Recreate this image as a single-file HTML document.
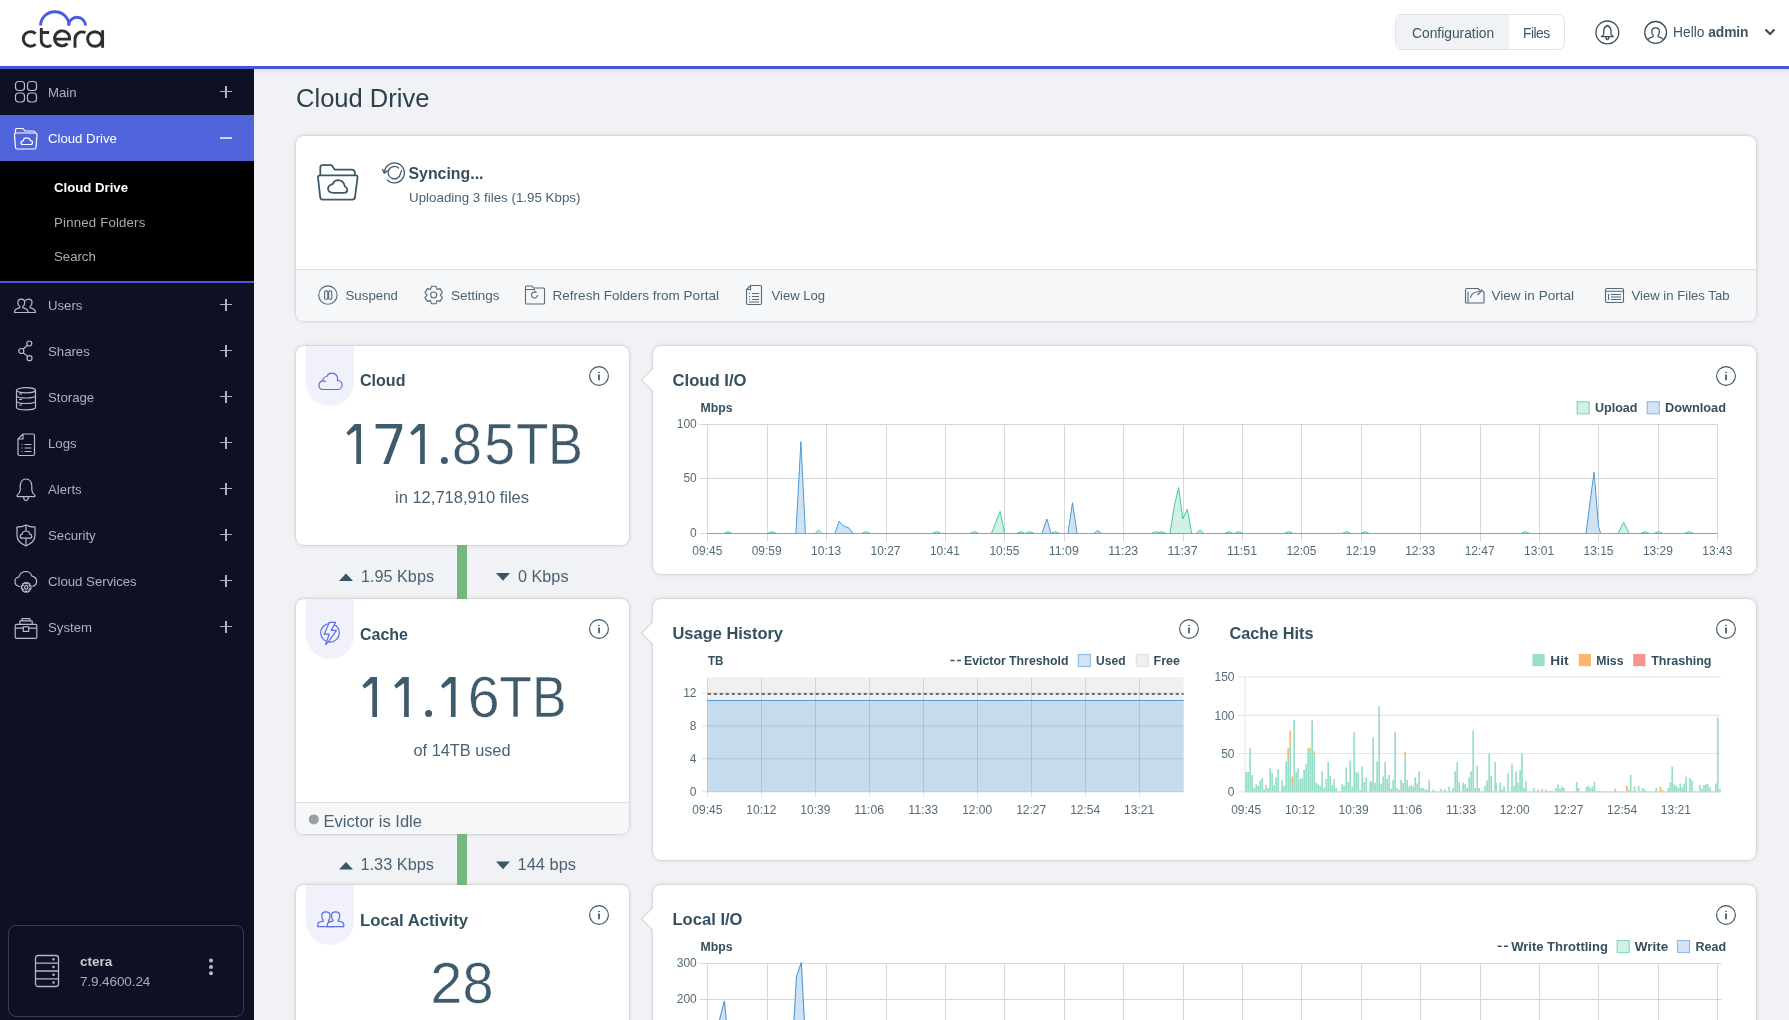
<!DOCTYPE html>
<html><head><meta charset="utf-8">
<style>
*{box-sizing:border-box;margin:0;padding:0}
html,body{width:1789px;height:1020px;overflow:hidden;background:#f0f2f5;font-family:"Liberation Sans",sans-serif;color:#3c5665}
.abs{position:absolute}
#hdr{position:absolute;left:0;top:0;width:1789px;height:66px;background:#fff;will-change:transform}
#hline{position:absolute;left:0;top:66px;width:1789px;height:3px;background:#4656d9}
#side{position:absolute;left:0;top:69px;width:254px;height:951px;background:#0d1123;will-change:transform}
.nav{position:absolute;left:0;width:254px;height:46px;color:#aeb1bd;font-size:13.2px}
.nav .t{position:absolute;left:48px;top:15.5px;letter-spacing:0px}
.nav .pl{position:absolute;left:220px;top:17px;width:12px;height:12px}
.nav .pl:before{content:"";position:absolute;left:0;top:5.2px;width:12px;height:1.3px;background:#aeb2bc}
.nav .pl:after{content:"";position:absolute;left:5.35px;top:-0.5px;width:1.3px;height:12px;background:#aeb2bc}
.nav svg{position:absolute;left:13px;top:11px}
.card{position:absolute;background:#fff;border-radius:8px;box-shadow:0 0 0 0.5px rgba(0,0,0,.07),0 0 4px rgba(0,0,0,.17)}
.info{position:absolute;width:21px;height:21px;border:1.3px solid #3c5665;border-radius:50%}
.info:after{content:"i";position:absolute;left:0;top:2px;width:100%;text-align:center;font:bold 12px "Liberation Serif",serif;color:#3c5665}
</style></head><body>
<div id="hdr">
<svg class="abs" style="left:0;top:0" width="120" height="60" viewBox="0 0 120 60">
 <g fill="none" stroke="#4a5bdc" stroke-width="2.9">
  <path d="M40.6 25.6 A14.2 13.8 0 0 1 69.1 25.6"/>
  <path d="M68.5 25.6 A8.5 8.3 0 0 1 85.5 25.6"/>
 </g>
 <g fill="none" stroke="#2f2f33" stroke-width="2.9">
  <path d="M35.6 33.6 A7.3 7.3 0 1 0 35.6 44.2"/>
  <path d="M41.3 28 V40.5 A6 6 0 0 0 51.3 45"/>
  <path d="M41.3 32.5 H49.2"/>
  <path d="M54.5 39.1 H69.6 A7.5 7.5 0 1 0 67.5 43.6"/>
  <path d="M75 47.8 V39 A7 7 0 0 1 85.4 32.8"/>
  <circle cx="94.9" cy="39" r="7.3"/>
  <path d="M102.6 30.2 V47.8"/>
 </g>
</svg>
<div class="abs" style="left:1395px;top:14px;width:170px;height:36px;border:1px solid #dfe2e6;border-radius:7px;overflow:hidden;background:#fff">
 <div class="abs" style="left:0;top:0;width:113px;height:34px;background:#f0f2f5"></div>
 <div class="abs" style="left:16px;top:10.5px;font-size:13.8px;color:#3c5665">Configuration</div>
 <div class="abs" style="left:127px;top:10.5px;font-size:13.8px;letter-spacing:-0.5px;color:#3c5665">Files</div>
</div>
<svg class="abs" style="left:1590px;top:15px" width="35" height="35" viewBox="0 0 35 35">
 <circle cx="17.35" cy="17.4" r="11.4" fill="none" stroke="#36505f" stroke-width="1.3"/>
 <path d="M17.35 10.3 Q14 12 13.7 15.5 V19.2 Q13.4 20.6 11.4 21.6 H23.3 Q21.3 20.6 21 19.2 V15.5 Q20.7 12 17.35 10.3 Z M15.8 21.8 Q15.8 24.5 17.35 24.5 Q18.9 24.5 18.9 21.8" fill="none" stroke="#36505f" stroke-width="1.3" stroke-linejoin="round"/>
</svg>
<svg class="abs" style="left:1638px;top:15px" width="35" height="35" viewBox="0 0 35 35">
 <circle cx="17.6" cy="17.4" r="10.9" fill="none" stroke="#36505f" stroke-width="1.3"/>
 <path d="M9.8 24.8 Q11 22.8 14 22.2 Q15.3 21.9 15.3 20.6 Q13.8 19.2 13.8 16.5 Q13.8 12.8 17.6 12.8 Q21.4 12.8 21.4 16.5 Q21.4 19.2 19.9 20.6 Q19.9 21.9 21.2 22.2 Q24.2 22.8 25.4 24.8" fill="none" stroke="#36505f" stroke-width="1.3"/>
</svg>
<div class="abs" style="left:1673px;top:25px;font-size:13.8px;color:#3c5665;white-space:nowrap">Hello <b style="letter-spacing:-0.1px">admin</b></div>
<svg class="abs" style="left:1762px;top:26px" width="16" height="12" viewBox="0 0 16 12">
 <path d="M3.5 3.5 L8 8 L12.5 3.5" fill="none" stroke="#36505f" stroke-width="2.2"/>
</svg>
</div>
<div id="hline"></div>
<div id="hshadow" class="abs" style="left:254px;top:69px;width:1535px;height:5px;background:linear-gradient(rgba(0,0,0,.07),rgba(0,0,0,0))"></div>
<div id="side">
<div class="nav" style="top:0"><svg width="26" height="26" viewBox="0 0 26 26" stroke="#b9bcc6" stroke-width="1.2" fill="none"><rect x="2.5" y="1.5" width="9" height="9" rx="3"/><rect x="14.5" y="1.5" width="9" height="9" rx="3"/><rect x="2.5" y="13" width="9" height="9" rx="3"/><rect x="14.5" y="13" width="9" height="9" rx="3"/></svg><span class="t">Main</span><i class="pl"></i></div>
<div class="nav" style="top:46px;background:#5064dc;color:#fff"><svg width="26" height="26" viewBox="0 0 26 26" stroke="#fff" stroke-width="1.2" fill="none"><path d="M2.5 7 V4 Q2.5 2.5 4 2.5 H10 L12 5 H20.5 Q22 5 22 6.5 V7"/><path d="M1.5 8.5 Q1.5 7 3 7 H22.5 Q24 7 24 8.5 L23 21.5 Q22.8 23 21.5 23 H4 Q2.7 23 2.5 21.5 Z"/><path d="M8 18.5 H17.5 Q19.5 18.5 19.5 16.5 Q19.5 14.6 17.4 14.6 Q16.6 11.8 13.6 11.8 Q10.5 11.8 10.2 14.8 Q8 14.8 8 16.6 Q8 18.5 10 18.5"/></svg><span class="t">Cloud Drive</span><i class="abs" style="left:220px;top:22px;width:12px;height:1.6px;background:#d3d7f6"></i></div>
<div class="abs" style="left:0;top:92px;width:254px;height:120px;background:#000"></div>
<div class="abs" style="left:0;top:212px;width:254px;height:2px;background:#4a5bd8"></div>
<div class="abs" style="left:54px;top:111px;font-size:13.2px;font-weight:bold;color:#fff;letter-spacing:0px">Cloud Drive</div>
<div class="abs" style="left:54px;top:146px;font-size:13.2px;color:#a9acb6;letter-spacing:0.2px">Pinned Folders</div>
<div class="abs" style="left:54px;top:180px;font-size:13.2px;color:#a9acb6;letter-spacing:0px">Search</div>
<div class="nav" style="top:213px"><svg width="26" height="26" viewBox="0 0 26 26" stroke="#b9bcc6" stroke-width="1.2" fill="none"><path d="M1.5 19.5 Q1.5 16.2 4.8 15.4 L6.8 14.8 V13.5 Q4.9 12.3 4.9 9.6 Q4.9 6.2 8.3 6.2 Q11.7 6.2 11.7 9.6 Q11.7 12.3 9.8 13.5 V14.8 L11.8 15.4 Q15.1 16.2 15.1 19.5 Z"/><path d="M12.3 7.6 Q13.2 6.2 15.6 6.2 Q19 6.2 19 9.6 Q19 12.3 17.1 13.5 V14.8 L19.1 15.4 Q22.4 16.2 22.4 19.5 H15.1"/></svg><span class="t">Users</span><i class="pl"></i></div>
<div class="nav" style="top:259px"><svg width="26" height="26" viewBox="0 0 26 26" stroke="#b9bcc6" stroke-width="1.2" fill="none"><circle cx="8.3" cy="12" r="2.5"/><circle cx="16.3" cy="4.5" r="2.5"/><circle cx="16.5" cy="19.2" r="2.5"/><path d="M10.1 10.3 L14.5 6.2 M10.2 13.8 L14.6 17.4"/></svg><span class="t">Shares</span><i class="pl"></i></div>
<div class="nav" style="top:305px"><svg width="26" height="26" viewBox="0 0 26 26" stroke="#b9bcc6" stroke-width="1.2" fill="none"><ellipse cx="13" cy="5.3" rx="9.5" ry="2.6"/><path d="M3.5 5.3 V22.2 Q3.5 24.8 13 24.8 Q22.5 24.8 22.5 22.2 V5.3 M3.5 10.5 Q3.5 13 13 13 Q22.5 13 22.5 10.5 M3.5 16 Q3.5 18.5 13 18.5 Q22.5 18.5 22.5 16 M6 9 H9 M6 14.5 H9 M6 20 H9"/></svg><span class="t">Storage</span><i class="pl"></i></div>
<div class="nav" style="top:351px"><svg width="26" height="26" viewBox="0 0 26 26" stroke="#b9bcc6" stroke-width="1.2" fill="none"><path d="M10 3 H20 Q21.5 3 21.5 4.5 V23 Q21.5 24.5 20 24.5 H6.5 Q5 24.5 5 23 V8 Z M10 3 V8 H5"/><path d="M8.5 13.5 H9.5 M11.5 13.5 H18.5 M8.5 17 H9.5 M11.5 17 H18.5 M8.5 20.5 H9.5 M11.5 20.5 H18.5"/></svg><span class="t">Logs</span><i class="pl"></i></div>
<div class="nav" style="top:397px"><svg width="26" height="26" viewBox="0 0 26 26" stroke="#b9bcc6" stroke-width="1.2" fill="none"><path d="M13 2 Q7.6 2 7.2 9 V13 Q6.8 16.3 4.2 18.2 Q3.4 19.6 5 19.6 H21 Q22.6 19.6 21.8 18.2 Q19.2 16.3 18.8 13 V9 Q18.4 2 13 2 Z"/><path d="M10.6 19.8 Q10.8 23.6 13 23.6 Q15.2 23.6 15.4 19.8"/></svg><span class="t">Alerts</span><i class="pl"></i></div>
<div class="nav" style="top:443px"><svg width="26" height="26" viewBox="0 0 26 26" stroke="#b9bcc6" stroke-width="1.2" fill="none"><path d="M4 4.2 Q9 4.2 13 2 Q17 4.2 22 4.2 V12.5 Q22 19 13 23 Q4 19 4 12.5 Z"/><path d="M9.2 15.2 H16.8 Q18.8 15.2 18.8 13.2 Q18.8 11.3 16.9 11.2 Q16.3 8 13 8 Q9.7 8 9.1 11.2 Q7.2 11.3 7.2 13.2 Q7.2 15.2 9.2 15.2 Z M13 2.2 V8 M13 15.2 V22.8"/></svg><span class="t">Security</span><i class="pl"></i></div>
<div class="nav" style="top:489px"><svg width="26" height="26" viewBox="0 0 26 26" stroke="#b9bcc6" stroke-width="1.2" fill="none"><path d="M7.2 17.5 Q2 17.2 2 12.5 Q2 8.6 6 8 Q7 2.8 12.5 2.5 Q17.6 2.5 19 7.2 Q23.6 8 23.6 12.6 Q23.6 16.4 19.5 17.4"/><path d="M17.98 16.92 L17.98 19.88 L16.35 20.33 L16.45 20.16 L16.87 21.80 L14.31 23.28 L13.10 22.10 L13.30 22.10 L12.09 23.28 L9.53 21.80 L9.95 20.16 L10.05 20.33 L8.42 19.88 L8.42 16.92 L10.05 16.47 L9.95 16.64 L9.53 15.00 L12.09 13.52 L13.30 14.70 L13.10 14.70 L14.31 13.52 L16.87 15.00 L16.45 16.64 L16.35 16.47 Z" fill="#0d1123"/><circle cx="13.2" cy="18.4" r="1.7"/></svg><span class="t">Cloud Services</span><i class="pl"></i></div>
<div class="nav" style="top:535px"><svg width="26" height="26" viewBox="0 0 26 26" stroke="#b9bcc6" stroke-width="1.2" fill="none"><rect x="2.2" y="9.3" width="21.6" height="14" rx="1.3"/><path d="M6.8 9.3 V6.6 Q6.8 5.8 7.6 5.8 H18.4 Q19.2 5.8 19.2 6.6 V9.3 M9 5.8 V4.4 Q9 3.7 9.7 3.7 H16.3 Q17 3.7 17 4.4 V5.8 M2.2 13.2 H10.3 M15.7 13.2 H23.8"/><rect x="10.3" y="11.8" width="5.4" height="4.6"/></svg><span class="t">System</span><i class="pl"></i></div>
<div class="abs" style="left:8px;top:856px;width:236px;height:92px;border:1px solid #3a3e4c;border-radius:8px"></div>
<svg class="abs" style="left:30px;top:950px" width="1" height="1"></svg>
<svg class="abs" style="left:33px;top:884px" width="28" height="36" viewBox="0 0 28 36" stroke="#b5b8c0" stroke-width="1.3" fill="none"><rect x="2.5" y="2.5" width="23" height="31" rx="2.5"/><path d="M2.5 10.2 H25.5 M2.5 18 H25.5 M2.5 25.8 H25.5"/><circle cx="20.5" cy="6.3" r=".6" fill="#b5b8c0"/><circle cx="20.5" cy="14" r=".6" fill="#b5b8c0"/><circle cx="20.5" cy="21.8" r=".6" fill="#b5b8c0"/><circle cx="20.5" cy="29.5" r=".6" fill="#b5b8c0"/></svg>
<div class="abs" style="left:80px;top:885px;font-size:13.5px;font-weight:bold;color:#c9cbd2">ctera</div>
<div class="abs" style="left:80px;top:905px;font-size:13.5px;color:#a9acb6;letter-spacing:-0.1px">7.9.4600.24</div>
<div class="abs" style="left:208px;top:958px"></div>
<svg class="abs" style="left:205px;top:888px" width="12" height="22" viewBox="0 0 12 22" fill="#b9bcc4"><circle cx="6" cy="3.5" r="2"/><circle cx="6" cy="10" r="2"/><circle cx="6" cy="16.3" r="2"/></svg>
</div>
<div class="card" style="left:296px;top:136px;width:1460px;height:185px;overflow:hidden"></div>
<div class="card" style="left:296px;top:346px;width:333px;height:199px;"></div>
<div class="card" style="left:296px;top:599px;width:333px;height:235px;"></div>
<div class="card" style="left:296px;top:885px;width:333px;height:200px;"></div>
<div class="card" style="left:653px;top:346px;width:1103px;height:228px;"></div>
<div class="card" style="left:653px;top:599px;width:1103px;height:261px;"></div>
<div class="card" style="left:653px;top:885px;width:1103px;height:200px;"></div>
<div class="abs" style="left:296px;top:269px;width:1460px;height:52px;background:#f6f7f8;border-top:1px solid #dde0e3;border-radius:0 0 8px 8px"></div>
<div class="abs" style="left:296px;top:802px;width:333px;height:32px;background:#f6f7f8;border-top:1px solid #dde0e3;border-radius:0 0 8px 8px"></div>
<div class="abs" style="left:457px;top:545px;width:10px;height:54px;background:#74b97b"></div>
<div class="abs" style="left:457px;top:834px;width:10px;height:51px;background:#74b97b"></div>
<div class="abs" style="left:306px;top:346px;width:48px;height:60px;background:#f0f1fb;border-radius:0 0 24px 24px"></div>
<div class="abs" style="left:306px;top:599px;width:48px;height:60px;background:#f0f1fb;border-radius:0 0 24px 24px"></div>
<div class="abs" style="left:306px;top:885px;width:48px;height:60px;background:#f0f1fb;border-radius:0 0 24px 24px"></div>
<svg class="abs" style="left:0;top:0;will-change:transform" width="1789" height="1020" viewBox="0 0 1789 1020" font-family="Liberation Sans, sans-serif">
<path d="M653.5 368 L641.5 380 L653.5 392" fill="#fff" stroke="#bfc6cb" stroke-width="1"/>
<rect x="653" y="367" width="3" height="26" fill="#fff"/>
<path d="M653.5 621 L641.5 633 L653.5 645" fill="#fff" stroke="#bfc6cb" stroke-width="1"/>
<rect x="653" y="620" width="3" height="26" fill="#fff"/>
<path d="M653.5 907 L641.5 919 L653.5 931" fill="#fff" stroke="#bfc6cb" stroke-width="1"/>
<rect x="653" y="906" width="3" height="26" fill="#fff"/>
<text x="296" y="107" font-size="25" fill="#2c414e" textLength="133.5" lengthAdjust="spacingAndGlyphs">Cloud Drive</text>
<g fill="none" stroke="#3d5868" stroke-width="1.8" stroke-linejoin="round" stroke-linecap="round"><path d="M320.3 175 V167.5 Q320.3 165.2 322.6 165.2 H330.8 Q331.8 165.2 332.4 166.2 L334.6 169.6 H351.8 Q354.8 169.6 354.8 172.6 V175"/><path d="M320 175.3 H355.8 Q357.8 175.3 357.5 177.5 L355 197.2 Q354.7 199.6 352.4 199.6 H322.8 Q320.5 199.6 320.2 197.2 L318 177.5 Q317.8 175.3 320 175.3 Z"/><path d="M333.5 192.8 H344.2 Q347.3 192.8 347.3 189.8 Q347.3 187.6 345 186.5 Q343.5 180.2 337.8 180.2 Q334 180.5 333 183.8 Q328 185 328 189 Q328.5 192.8 333.5 192.8 Z"/></g>
<g fill="none" stroke="#3d5868" stroke-width="1.3" stroke-linecap="round" stroke-linejoin="round"><path d="M384.4 172.3 A10 10 0 1 1 387.2 179.9"/><path d="M382.6 169.6 L384.3 173.2 L387.3 170.8"/><path d="M398.5 168.1 A6.2 6.2 0 1 0 400.4 173.9"/><path d="M401.6 170.6 L400.4 173.9"/></g>
<text x="408.5" y="179" font-size="16" font-weight="bold" fill="#34505f" textLength="75" lengthAdjust="spacingAndGlyphs">Syncing...</text>
<text x="409" y="202" font-size="13" fill="#4a6272" textLength="171.5" lengthAdjust="spacingAndGlyphs">Uploading 3 files (1.95 Kbps)</text>
<g fill="none" stroke="#55697a" stroke-width="1.1">
<circle cx="327.9" cy="295.1" r="9.2"/><rect x="324.6" y="290.9" width="3.2" height="8.4" rx="1.4"/><rect x="328.6" y="290.9" width="3.2" height="8.4" rx="1.4"/>
<path stroke-linejoin="round" d="M431.39 286.30 L436.01 286.30 L436.86 289.21 L437.13 289.36 L440.08 288.65 L442.39 292.65 L440.30 294.84 L440.30 295.16 L442.39 297.35 L440.08 301.35 L437.13 300.64 L436.86 300.79 L436.01 303.70 L431.39 303.70 L430.54 300.79 L430.27 300.64 L427.32 301.35 L425.01 297.35 L427.10 295.16 L427.10 294.84 L425.01 292.65 L427.32 288.65 L430.27 289.36 L430.54 289.21 Z"/>
<circle cx="433.7" cy="295" r="3"/>
<path d="M525.5 288.5 V287 Q525.5 286 526.5 286 H532 L533.5 288 H543.5 Q544.5 288 544.5 289 V303 Q544.5 304 543.5 304 H526.5 Q525.5 304 525.5 303 Z M525.5 289.5 H535"/>
<path d="M537.5 295 A3 3 0 1 1 535 292" /><path d="M535 290.5 V292.2 H536.8"/>
<path d="M750.5 285.5 H760 Q761.5 285.5 761.5 287 V303 Q761.5 304.5 760 304.5 H748 Q746.5 304.5 746.5 303 V289.5 Z M750.5 285.5 V289.5 H746.5"/>
<path d="M749 293.5 H750 M752 293.5 H759 M749 296.5 H750 M752 296.5 H759 M749 299.5 H750 M752 299.5 H759 M749 302 H759"/>
<path d="M1478.5 288.5 H1467 Q1465.5 288.5 1465.5 290 V302 Q1465.5 303 1466.5 303 H1483 Q1484 303 1484 302 V292.5 L1481 289.5"/>
<path d="M1468 303 V291.5 M1470.5 298 Q1471 292 1479.5 291.5 M1477.5 288 L1481 291.5 L1477.5 295"/>
<rect x="1605.5" y="288.5" width="18" height="14" rx="1.5"/><path d="M1605.5 291.3 H1623.5 M1608.5 294 V300 M1611 294.5 H1621 M1611 297 H1621 M1611 299.5 H1621"/>
</g>
<text x="345.5" y="300" font-size="13.5" fill="#4a6272" textLength="52.5" lengthAdjust="spacingAndGlyphs">Suspend</text>
<text x="451" y="300" font-size="13.5" fill="#4a6272" textLength="48.5" lengthAdjust="spacingAndGlyphs">Settings</text>
<text x="552.5" y="300" font-size="13.5" fill="#4a6272" textLength="166.5" lengthAdjust="spacingAndGlyphs">Refresh Folders from Portal</text>
<text x="771.5" y="300" font-size="13.5" fill="#4a6272" textLength="53.5" lengthAdjust="spacingAndGlyphs">View Log</text>
<text x="1491.5" y="300" font-size="13.5" fill="#4a6272" textLength="82.5" lengthAdjust="spacingAndGlyphs">View in Portal</text>
<text x="1631.5" y="300" font-size="13.5" fill="#4a6272" textLength="98" lengthAdjust="spacingAndGlyphs">View in Files Tab</text>
<path d="M322 389.5 H337.5 A4.6 4.6 0 0 0 337.5 380.3 V379 A5.6 5.6 0 0 0 326.8 376.5 A4.2 4.2 0 0 0 322.8 380.8 A4.5 4.5 0 0 0 322 389.5 Z M322.8 380.8 A4.2 4.2 0 0 1 325.6 381.8" fill="none" stroke="#5a6ee0" stroke-width="1.2"/>
<text x="360" y="386" font-size="16.5" font-weight="bold" fill="#34505f" textLength="45.5" lengthAdjust="spacingAndGlyphs">Cloud</text>
<circle cx="599" cy="376" r="9.4" fill="none" stroke="#3a5566" stroke-width="1.1"/>
<path d="M599 375.2 V379.6" stroke="#3a5566" stroke-width="1.7" stroke-linecap="round" fill="none"/>
<path d="M598.1 372.4 H599.9" stroke="#3a5566" stroke-width="1" fill="none"/>
<path d="M354.7 424.1 H361.0 V463.9 H356.3 V430.1 L348.4 435.6 L346.4 432.8 Z" fill="#3f5a6a"/>
<path d="M375.6 424.1 H402.2 V428.2 L388.8 463.9 H383.3 L396.8 428.5 H375.6 Z" fill="#3f5a6a"/>
<path d="M418.5 424.1 H424.8 V463.9 H420.1 V430.1 L412.2 435.6 L410.2 432.8 Z" fill="#3f5a6a"/>
<circle cx="444.4" cy="460.4" r="3.5" fill="#3f5a6a"/>
<text transform="translate(451.91 463.9) scale(0.926 1)" font-size="58" fill="#3f5a6a" stroke="#fff" stroke-width="0.5">8</text>
<text transform="translate(484.22 463.9) scale(0.959 1)" font-size="58" fill="#3f5a6a" stroke="#fff" stroke-width="0.5">5</text>
<text transform="translate(515.89 463.9) scale(0.915 1)" font-size="58" fill="#3f5a6a" stroke="#fff" stroke-width="0.5">T</text>
<text transform="translate(548.06 463.9) scale(0.903 1)" font-size="58" fill="#3f5a6a" stroke="#fff" stroke-width="0.5">B</text>
<text x="462" y="503" font-size="16" fill="#4a6272" text-anchor="middle" textLength="134" lengthAdjust="spacingAndGlyphs">in 12,718,910 files</text>
<g fill="none" stroke="#5a6ee0" stroke-width="1.2" stroke-linejoin="round"><circle cx="330" cy="632.8" r="9.3"/><path d="M329.4 622.3 H335.7 L331.2 630.4 H336.4 L328.6 641.6 L325.6 644.6 L329.2 634.2 H324.2 Z" fill="#f0f1fb"/></g>
<text x="360" y="639.5" font-size="16.5" font-weight="bold" fill="#34505f" textLength="48" lengthAdjust="spacingAndGlyphs">Cache</text>
<circle cx="599" cy="629" r="9.4" fill="none" stroke="#3a5566" stroke-width="1.1"/>
<path d="M599 628.2 V632.6" stroke="#3a5566" stroke-width="1.7" stroke-linecap="round" fill="none"/>
<path d="M598.1 625.4 H599.9" stroke="#3a5566" stroke-width="1" fill="none"/>
<path d="M370.7 676.9 H377.0 V717.0 H372.3 V682.9 L364.4 688.4 L362.4 685.6 Z" fill="#3f5a6a"/>
<path d="M402.5 676.9 H408.8 V717.0 H404.1 V682.9 L396.2 688.4 L394.2 685.6 Z" fill="#3f5a6a"/>
<circle cx="428.6" cy="713.5" r="3.5" fill="#3f5a6a"/>
<path d="M449.3 676.9 H455.6 V717.0 H450.9 V682.9 L443.0 688.4 L441.0 685.6 Z" fill="#3f5a6a"/>
<text transform="translate(467.73 717.0) scale(0.989 1)" font-size="58" fill="#3f5a6a" stroke="#fff" stroke-width="0.5">6</text>
<text transform="translate(499.18 717.0) scale(0.921 1)" font-size="58" fill="#3f5a6a" stroke="#fff" stroke-width="0.5">T</text>
<text transform="translate(532.11 717.0) scale(0.894 1)" font-size="58" fill="#3f5a6a" stroke="#fff" stroke-width="0.5">B</text>
<text x="462" y="756" font-size="16" fill="#4a6272" text-anchor="middle" textLength="97" lengthAdjust="spacingAndGlyphs">of 14TB used</text>
<circle cx="313.8" cy="819.4" r="5" fill="#9a9fa3"/>
<text x="323.5" y="826.8" font-size="16" fill="#4a6272" textLength="98.5" lengthAdjust="spacingAndGlyphs">Evictor is Idle</text>
<g fill="none" stroke="#5a6ee0" stroke-width="1.2" stroke-linejoin="round"><path d="M317.7 926.6 V924.6 Q317.7 922 320.9 921.6 L323.29999999999995 921.2 V920.2 Q321.9 919 321.9 916.8 V915 Q321.9 911.9 325.9 911.9 Q329.9 911.9 329.9 915 V916.8 Q329.9 919 328.5 920.2 V921.2 L330.9 921.6 Q334.09999999999997 922 334.09999999999997 924.6 V926.6 Z" fill="#f0f1fb"/><path d="M327.40000000000003 926.6 V924.6 Q327.40000000000003 922 330.6 921.6 L333.0 921.2 V920.2 Q331.6 919 331.6 916.8 V915 Q331.6 911.9 335.6 911.9 Q339.6 911.9 339.6 915 V916.8 Q339.6 919 338.20000000000005 920.2 V921.2 L340.6 921.6 Q343.8 922 343.8 924.6 V926.6 Z" fill="#f0f1fb"/></g>
<text x="360" y="925.5" font-size="16.5" font-weight="bold" fill="#34505f" textLength="108" lengthAdjust="spacingAndGlyphs">Local Activity</text>
<circle cx="599" cy="915" r="9.4" fill="none" stroke="#3a5566" stroke-width="1.1"/>
<path d="M599 914.2 V918.6" stroke="#3a5566" stroke-width="1.7" stroke-linecap="round" fill="none"/>
<path d="M598.1 911.4 H599.9" stroke="#3a5566" stroke-width="1" fill="none"/>
<text transform="translate(430.21 1002.7) scale(0.996 1)" font-size="58" fill="#3f5a6a" stroke="#fff" stroke-width="0.5">2</text>
<text transform="translate(462.41 1002.7) scale(0.963 1)" font-size="58" fill="#3f5a6a" stroke="#fff" stroke-width="0.5">8</text>
<path d="M339 581 L346 573.5 L353 581 Z M496 573 L510 573 L503 580.8 Z" fill="#3a5566"/>
<text x="361" y="581.5" font-size="17" fill="#4a6272" textLength="73" lengthAdjust="spacingAndGlyphs">1.95 Kbps</text>
<text x="518" y="581.5" font-size="17" fill="#4a6272" textLength="50.5" lengthAdjust="spacingAndGlyphs">0 Kbps</text>
<path d="M339 869.5 L346 862 L353 869.5 Z M496 861.5 L510 861.5 L503 869.3 Z" fill="#3a5566"/>
<text x="360.5" y="870" font-size="17" fill="#4a6272" textLength="73.5" lengthAdjust="spacingAndGlyphs">1.33 Kbps</text>
<text x="517.5" y="870" font-size="17" fill="#4a6272" textLength="58.5" lengthAdjust="spacingAndGlyphs">144 bps</text>
<text x="672.5" y="385.8" font-size="16.5" font-weight="bold" fill="#34505f" textLength="74" lengthAdjust="spacingAndGlyphs">Cloud I/O</text>
<circle cx="1726" cy="376" r="9.4" fill="none" stroke="#3a5566" stroke-width="1.1"/>
<path d="M1726 375.2 V379.6" stroke="#3a5566" stroke-width="1.7" stroke-linecap="round" fill="none"/>
<path d="M1725.1 372.4 H1726.9" stroke="#3a5566" stroke-width="1" fill="none"/>
<text x="672.5" y="638.5" font-size="16.5" font-weight="bold" fill="#34505f" textLength="110.5" lengthAdjust="spacingAndGlyphs">Usage History</text>
<circle cx="1189" cy="629" r="9.4" fill="none" stroke="#3a5566" stroke-width="1.1"/>
<path d="M1189 628.2 V632.6" stroke="#3a5566" stroke-width="1.7" stroke-linecap="round" fill="none"/>
<path d="M1188.1 625.4 H1189.9" stroke="#3a5566" stroke-width="1" fill="none"/>
<text x="1229.5" y="639" font-size="16.5" font-weight="bold" fill="#34505f" textLength="84" lengthAdjust="spacingAndGlyphs">Cache Hits</text>
<circle cx="1726" cy="629" r="9.4" fill="none" stroke="#3a5566" stroke-width="1.1"/>
<path d="M1726 628.2 V632.6" stroke="#3a5566" stroke-width="1.7" stroke-linecap="round" fill="none"/>
<path d="M1725.1 625.4 H1726.9" stroke="#3a5566" stroke-width="1" fill="none"/>
<text x="672.5" y="924.7" font-size="16.5" font-weight="bold" fill="#34505f" textLength="70" lengthAdjust="spacingAndGlyphs">Local I/O</text>
<circle cx="1726" cy="915" r="9.4" fill="none" stroke="#3a5566" stroke-width="1.1"/>
<path d="M1726 914.2 V918.6" stroke="#3a5566" stroke-width="1.7" stroke-linecap="round" fill="none"/>
<path d="M1725.1 911.4 H1726.9" stroke="#3a5566" stroke-width="1" fill="none"/>
<g stroke="#d7d8da" stroke-width="1">
<path d="M707.5 424 V541.5"/>
<path d="M767.5 424 V541.5"/>
<path d="M826.5 424 V541.5"/>
<path d="M886.5 424 V541.5"/>
<path d="M945.5 424 V541.5"/>
<path d="M1004.5 424 V541.5"/>
<path d="M1064.5 424 V541.5"/>
<path d="M1123.5 424 V541.5"/>
<path d="M1183.5 424 V541.5"/>
<path d="M1242.5 424 V541.5"/>
<path d="M1301.5 424 V541.5"/>
<path d="M1361.5 424 V541.5"/>
<path d="M1420.5 424 V541.5"/>
<path d="M1480.5 424 V541.5"/>
<path d="M1539.5 424 V541.5"/>
<path d="M1598.5 424 V541.5"/>
<path d="M1658.5 424 V541.5"/>
<path d="M1717.5 424 V541.5"/>
<path d="M699.5 424.5 H1717.3"/>
<path d="M699.5 478.5 H1717.3"/>
<path d="M699.5 533.5 H1717.3"/>
</g>
<text x="707.3" y="555.2" font-size="12" fill="#566b78" text-anchor="middle" textLength="30" lengthAdjust="spacingAndGlyphs">09:45</text>
<text x="766.7" y="555.2" font-size="12" fill="#566b78" text-anchor="middle" textLength="30" lengthAdjust="spacingAndGlyphs">09:59</text>
<text x="826.1" y="555.2" font-size="12" fill="#566b78" text-anchor="middle" textLength="30" lengthAdjust="spacingAndGlyphs">10:13</text>
<text x="885.5" y="555.2" font-size="12" fill="#566b78" text-anchor="middle" textLength="30" lengthAdjust="spacingAndGlyphs">10:27</text>
<text x="944.9" y="555.2" font-size="12" fill="#566b78" text-anchor="middle" textLength="30" lengthAdjust="spacingAndGlyphs">10:41</text>
<text x="1004.4" y="555.2" font-size="12" fill="#566b78" text-anchor="middle" textLength="30" lengthAdjust="spacingAndGlyphs">10:55</text>
<text x="1063.8" y="555.2" font-size="12" fill="#566b78" text-anchor="middle" textLength="30" lengthAdjust="spacingAndGlyphs">11:09</text>
<text x="1123.2" y="555.2" font-size="12" fill="#566b78" text-anchor="middle" textLength="30" lengthAdjust="spacingAndGlyphs">11:23</text>
<text x="1182.6" y="555.2" font-size="12" fill="#566b78" text-anchor="middle" textLength="30" lengthAdjust="spacingAndGlyphs">11:37</text>
<text x="1242.0" y="555.2" font-size="12" fill="#566b78" text-anchor="middle" textLength="30" lengthAdjust="spacingAndGlyphs">11:51</text>
<text x="1301.4" y="555.2" font-size="12" fill="#566b78" text-anchor="middle" textLength="30" lengthAdjust="spacingAndGlyphs">12:05</text>
<text x="1360.8" y="555.2" font-size="12" fill="#566b78" text-anchor="middle" textLength="30" lengthAdjust="spacingAndGlyphs">12:19</text>
<text x="1420.2" y="555.2" font-size="12" fill="#566b78" text-anchor="middle" textLength="30" lengthAdjust="spacingAndGlyphs">12:33</text>
<text x="1479.7" y="555.2" font-size="12" fill="#566b78" text-anchor="middle" textLength="30" lengthAdjust="spacingAndGlyphs">12:47</text>
<text x="1539.1" y="555.2" font-size="12" fill="#566b78" text-anchor="middle" textLength="30" lengthAdjust="spacingAndGlyphs">13:01</text>
<text x="1598.5" y="555.2" font-size="12" fill="#566b78" text-anchor="middle" textLength="30" lengthAdjust="spacingAndGlyphs">13:15</text>
<text x="1657.9" y="555.2" font-size="12" fill="#566b78" text-anchor="middle" textLength="30" lengthAdjust="spacingAndGlyphs">13:29</text>
<text x="1717.3" y="555.2" font-size="12" fill="#566b78" text-anchor="middle" textLength="30" lengthAdjust="spacingAndGlyphs">13:43</text>
<text x="696.8" y="427.8" font-size="12" fill="#566b78" text-anchor="end">100</text>
<text x="696.8" y="482.2" font-size="12" fill="#566b78" text-anchor="end">50</text>
<text x="696.8" y="536.7" font-size="12" fill="#566b78" text-anchor="end">0</text>
<text x="700.5" y="412.4" font-size="12" font-weight="bold" fill="#34505f" textLength="32" lengthAdjust="spacingAndGlyphs">Mbps</text>
<rect x="1577.2" y="401.8" width="12" height="12" fill="#d3f1e7" stroke="#86d9bd" stroke-width="1.2"/>
<text x="1595" y="412.4" font-size="12" font-weight="bold" fill="#34505f" textLength="42.5" lengthAdjust="spacingAndGlyphs">Upload</text>
<rect x="1647.3" y="401.8" width="12" height="12" fill="#d3e5f5" stroke="#8fbde5" stroke-width="1.2"/>
<text x="1665" y="412.4" font-size="12" font-weight="bold" fill="#34505f" textLength="61" lengthAdjust="spacingAndGlyphs">Download</text>
<path d="M795.9 533.2 L795.9 533.2 L800.9 441.7 L805.4 533.2 L805.4 533.2 Z" fill="#cfe3f4" stroke="none"/>
<path d="M795.9 533.2 L800.9 441.7 L805.4 533.2" fill="none" stroke="#4d9ad6" stroke-width="1" stroke-linejoin="round"/>
<path d="M835.0 533.2 L835.0 533.2 L839.1 521.2 L843.5 526.1 L848.7 527.8 L853.0 533.2 L853.0 533.2 Z" fill="#cfe3f4" stroke="none"/>
<path d="M835.0 533.2 L839.1 521.2 L843.5 526.1 L848.7 527.8 L853.0 533.2" fill="none" stroke="#4d9ad6" stroke-width="1" stroke-linejoin="round"/>
<path d="M1042.0 533.2 L1042.0 533.2 L1046.9 519.0 L1051.0 533.2 L1051.0 533.2 Z" fill="#cfe3f4" stroke="none"/>
<path d="M1042.0 533.2 L1046.9 519.0 L1051.0 533.2" fill="none" stroke="#4d9ad6" stroke-width="1" stroke-linejoin="round"/>
<path d="M1068.0 533.2 L1068.0 533.2 L1072.5 502.7 L1077.0 533.2 L1077.0 533.2 Z" fill="#cfe3f4" stroke="none"/>
<path d="M1068.0 533.2 L1072.5 502.7 L1077.0 533.2" fill="none" stroke="#4d9ad6" stroke-width="1" stroke-linejoin="round"/>
<path d="M1094.0 533.2 L1094.0 533.2 L1097.7 530.5 L1101.0 533.2 L1101.0 533.2 Z" fill="#cfe3f4" stroke="none"/>
<path d="M1094.0 533.2 L1097.7 530.5 L1101.0 533.2" fill="none" stroke="#4d9ad6" stroke-width="1" stroke-linejoin="round"/>
<path d="M1586.0 533.2 L1586.0 533.2 L1594.0 472.2 L1598.6 526.7 L1600.6 533.2 L1600.6 533.2 Z" fill="#cfe3f4" stroke="none"/>
<path d="M1586.0 533.2 L1594.0 472.2 L1598.6 526.7 L1600.6 533.2" fill="none" stroke="#4d9ad6" stroke-width="1" stroke-linejoin="round"/>
<path d="M815.5 533.2 L815.5 533.2 L818.5 529.9 L821.5 533.2 L821.5 533.2 Z" fill="#d2f0e6" stroke="none"/>
<path d="M815.5 533.2 L818.5 529.9 L821.5 533.2" fill="none" stroke="#46c89f" stroke-width="1" stroke-linejoin="round"/>
<path d="M991.5 533.2 L991.5 533.2 L1000.1 511.4 L1004.6 533.2 L1004.6 533.2 Z" fill="#d2f0e6" stroke="none"/>
<path d="M991.5 533.2 L1000.1 511.4 L1004.6 533.2" fill="none" stroke="#46c89f" stroke-width="1" stroke-linejoin="round"/>
<path d="M1170.0 533.2 L1170.0 533.2 L1174.5 504.9 L1178.6 487.5 L1182.8 519.0 L1187.4 509.2 L1191.6 533.2 L1191.6 533.2 Z" fill="#d2f0e6" stroke="none"/>
<path d="M1170.0 533.2 L1174.5 504.9 L1178.6 487.5 L1182.8 519.0 L1187.4 509.2 L1191.6 533.2" fill="none" stroke="#46c89f" stroke-width="1" stroke-linejoin="round"/>
<path d="M1196.5 533.2 L1196.5 533.2 L1200.0 529.9 L1203.5 533.2 L1203.5 533.2 Z" fill="#d2f0e6" stroke="none"/>
<path d="M1196.5 533.2 L1200.0 529.9 L1203.5 533.2" fill="none" stroke="#46c89f" stroke-width="1" stroke-linejoin="round"/>
<path d="M1618.0 533.2 L1618.0 533.2 L1623.7 522.3 L1629.0 533.2 L1629.0 533.2 Z" fill="#d2f0e6" stroke="none"/>
<path d="M1618.0 533.2 L1623.7 522.3 L1629.0 533.2" fill="none" stroke="#46c89f" stroke-width="1" stroke-linejoin="round"/>
<path d="M724.0 533.2 L724.0 533.2 L728.0 531.7 L732.0 533.2 L732.0 533.2 Z" fill="#d2f0e6" stroke="none"/>
<path d="M724.0 533.2 L728.0 531.7 L732.0 533.2" fill="none" stroke="#46c89f" stroke-width="1" stroke-linejoin="round"/>
<path d="M768.0 533.2 L768.0 533.2 L772.0 531.7 L776.0 533.2 L776.0 533.2 Z" fill="#d2f0e6" stroke="none"/>
<path d="M768.0 533.2 L772.0 531.7 L776.0 533.2" fill="none" stroke="#46c89f" stroke-width="1" stroke-linejoin="round"/>
<path d="M862.0 533.2 L862.0 533.2 L866.0 531.7 L870.0 533.2 L870.0 533.2 Z" fill="#d2f0e6" stroke="none"/>
<path d="M862.0 533.2 L866.0 531.7 L870.0 533.2" fill="none" stroke="#46c89f" stroke-width="1" stroke-linejoin="round"/>
<path d="M932.7 533.2 L932.7 533.2 L936.7 531.7 L940.7 533.2 L940.7 533.2 Z" fill="#d2f0e6" stroke="none"/>
<path d="M932.7 533.2 L936.7 531.7 L940.7 533.2" fill="none" stroke="#46c89f" stroke-width="1" stroke-linejoin="round"/>
<path d="M970.4 533.2 L970.4 533.2 L974.4 531.7 L978.4 533.2 L978.4 533.2 Z" fill="#d2f0e6" stroke="none"/>
<path d="M970.4 533.2 L974.4 531.7 L978.4 533.2" fill="none" stroke="#46c89f" stroke-width="1" stroke-linejoin="round"/>
<path d="M1017.0 533.2 L1017.0 533.2 L1021.0 531.7 L1025.0 533.2 L1025.0 533.2 Z" fill="#d2f0e6" stroke="none"/>
<path d="M1017.0 533.2 L1021.0 531.7 L1025.0 533.2" fill="none" stroke="#46c89f" stroke-width="1" stroke-linejoin="round"/>
<path d="M1025.8 533.2 L1025.8 533.2 L1029.8 531.7 L1033.8 533.2 L1033.8 533.2 Z" fill="#d2f0e6" stroke="none"/>
<path d="M1025.8 533.2 L1029.8 531.7 L1033.8 533.2" fill="none" stroke="#46c89f" stroke-width="1" stroke-linejoin="round"/>
<path d="M1051.0 533.2 L1051.0 533.2 L1055.0 531.7 L1059.0 533.2 L1059.0 533.2 Z" fill="#d2f0e6" stroke="none"/>
<path d="M1051.0 533.2 L1055.0 531.7 L1059.0 533.2" fill="none" stroke="#46c89f" stroke-width="1" stroke-linejoin="round"/>
<path d="M1151.8 533.2 L1151.8 533.2 L1155.8 531.7 L1159.8 533.2 L1159.8 533.2 Z" fill="#d2f0e6" stroke="none"/>
<path d="M1151.8 533.2 L1155.8 531.7 L1159.8 533.2" fill="none" stroke="#46c89f" stroke-width="1" stroke-linejoin="round"/>
<path d="M1157.6 533.2 L1157.6 533.2 L1161.6 531.7 L1165.6 533.2 L1165.6 533.2 Z" fill="#d2f0e6" stroke="none"/>
<path d="M1157.6 533.2 L1161.6 531.7 L1165.6 533.2" fill="none" stroke="#46c89f" stroke-width="1" stroke-linejoin="round"/>
<path d="M1225.0 533.2 L1225.0 533.2 L1229.0 531.7 L1233.0 533.2 L1233.0 533.2 Z" fill="#d2f0e6" stroke="none"/>
<path d="M1225.0 533.2 L1229.0 531.7 L1233.0 533.2" fill="none" stroke="#46c89f" stroke-width="1" stroke-linejoin="round"/>
<path d="M1234.6 533.2 L1234.6 533.2 L1238.6 531.7 L1242.6 533.2 L1242.6 533.2 Z" fill="#d2f0e6" stroke="none"/>
<path d="M1234.6 533.2 L1238.6 531.7 L1242.6 533.2" fill="none" stroke="#46c89f" stroke-width="1" stroke-linejoin="round"/>
<path d="M1284.7 533.2 L1284.7 533.2 L1288.7 531.7 L1292.7 533.2 L1292.7 533.2 Z" fill="#d2f0e6" stroke="none"/>
<path d="M1284.7 533.2 L1288.7 531.7 L1292.7 533.2" fill="none" stroke="#46c89f" stroke-width="1" stroke-linejoin="round"/>
<path d="M1342.4 533.2 L1342.4 533.2 L1346.4 531.7 L1350.4 533.2 L1350.4 533.2 Z" fill="#d2f0e6" stroke="none"/>
<path d="M1342.4 533.2 L1346.4 531.7 L1350.4 533.2" fill="none" stroke="#46c89f" stroke-width="1" stroke-linejoin="round"/>
<path d="M1361.0 533.2 L1361.0 533.2 L1365.0 531.7 L1369.0 533.2 L1369.0 533.2 Z" fill="#d2f0e6" stroke="none"/>
<path d="M1361.0 533.2 L1365.0 531.7 L1369.0 533.2" fill="none" stroke="#46c89f" stroke-width="1" stroke-linejoin="round"/>
<path d="M1521.5 533.2 L1521.5 533.2 L1525.5 531.7 L1529.5 533.2 L1529.5 533.2 Z" fill="#d2f0e6" stroke="none"/>
<path d="M1521.5 533.2 L1525.5 531.7 L1529.5 533.2" fill="none" stroke="#46c89f" stroke-width="1" stroke-linejoin="round"/>
<path d="M1640.9 533.2 L1640.9 533.2 L1644.9 531.7 L1648.9 533.2 L1648.9 533.2 Z" fill="#d2f0e6" stroke="none"/>
<path d="M1640.9 533.2 L1644.9 531.7 L1648.9 533.2" fill="none" stroke="#46c89f" stroke-width="1" stroke-linejoin="round"/>
<path d="M1654.3 533.2 L1654.3 533.2 L1658.3 531.7 L1662.3 533.2 L1662.3 533.2 Z" fill="#d2f0e6" stroke="none"/>
<path d="M1654.3 533.2 L1658.3 531.7 L1662.3 533.2" fill="none" stroke="#46c89f" stroke-width="1" stroke-linejoin="round"/>
<path d="M1685.0 533.2 L1685.0 533.2 L1689.0 531.7 L1693.0 533.2 L1693.0 533.2 Z" fill="#d2f0e6" stroke="none"/>
<path d="M1685.0 533.2 L1689.0 531.7 L1693.0 533.2" fill="none" stroke="#46c89f" stroke-width="1" stroke-linejoin="round"/>
<path d="M707.3 533.5 H1717.3" stroke="#46c89f" stroke-width="1"/>
<rect x="707.3" y="677.3" width="476.3" height="114.4" fill="#f0f0f0"/>
<rect x="707.3" y="699.9" width="476.3" height="91.8" fill="#c6dcec"/>
<g stroke="rgba(60,70,80,0.16)" stroke-width="1">
<path d="M707.5 677.3 V797"/>
<path d="M761.5 677.3 V797"/>
<path d="M815.5 677.3 V797"/>
<path d="M869.5 677.3 V797"/>
<path d="M923.5 677.3 V797"/>
<path d="M977.5 677.3 V797"/>
<path d="M1031.5 677.3 V797"/>
<path d="M1085.5 677.3 V797"/>
<path d="M1139.5 677.3 V797"/>
<path d="M702 693.0 H1183.6"/>
<path d="M702 725.9 H1183.6"/>
<path d="M702 758.8 H1183.6"/>
<path d="M702 791.7 H1183.6"/>
</g>
<path d="M707.3 700.5 H1183.6" stroke="#4e9cda" stroke-width="1.2"/>
<path d="M707.8 694 H1183.6" stroke="#676b6e" stroke-width="2" stroke-dasharray="3 3"/>
<path d="M707.3 791.7 H1183.6" stroke="#c9ced2" stroke-width="1"/>
<text x="696.5" y="697.3" font-size="12" fill="#566b78" text-anchor="end">12</text>
<text x="696.5" y="730.2" font-size="12" fill="#566b78" text-anchor="end">8</text>
<text x="696.5" y="763.1" font-size="12" fill="#566b78" text-anchor="end">4</text>
<text x="696.5" y="796.0" font-size="12" fill="#566b78" text-anchor="end">0</text>
<text x="707.3" y="814" font-size="12" fill="#566b78" text-anchor="middle" textLength="30" lengthAdjust="spacingAndGlyphs">09:45</text>
<text x="761.3" y="814" font-size="12" fill="#566b78" text-anchor="middle" textLength="30" lengthAdjust="spacingAndGlyphs">10:12</text>
<text x="815.3" y="814" font-size="12" fill="#566b78" text-anchor="middle" textLength="30" lengthAdjust="spacingAndGlyphs">10:39</text>
<text x="869.2" y="814" font-size="12" fill="#566b78" text-anchor="middle" textLength="30" lengthAdjust="spacingAndGlyphs">11:06</text>
<text x="923.2" y="814" font-size="12" fill="#566b78" text-anchor="middle" textLength="30" lengthAdjust="spacingAndGlyphs">11:33</text>
<text x="977.2" y="814" font-size="12" fill="#566b78" text-anchor="middle" textLength="30" lengthAdjust="spacingAndGlyphs">12:00</text>
<text x="1031.2" y="814" font-size="12" fill="#566b78" text-anchor="middle" textLength="30" lengthAdjust="spacingAndGlyphs">12:27</text>
<text x="1085.2" y="814" font-size="12" fill="#566b78" text-anchor="middle" textLength="30" lengthAdjust="spacingAndGlyphs">12:54</text>
<text x="1139.1" y="814" font-size="12" fill="#566b78" text-anchor="middle" textLength="30" lengthAdjust="spacingAndGlyphs">13:21</text>
<text x="708" y="664.8" font-size="12" font-weight="bold" fill="#34505f" textLength="15.5" lengthAdjust="spacingAndGlyphs">TB</text>
<path d="M950.5 660.5 H954.5 M957 660.5 H961" stroke="#3a5566" stroke-width="1.6"/>
<text x="964" y="664.8" font-size="12" font-weight="bold" fill="#34505f" textLength="104.5" lengthAdjust="spacingAndGlyphs">Evictor Threshold</text>
<rect x="1078.4" y="654.5" width="12" height="12" fill="#d3e5f5" stroke="#8fbde5" stroke-width="1.2"/>
<text x="1096" y="664.8" font-size="12" font-weight="bold" fill="#34505f" textLength="29.5" lengthAdjust="spacingAndGlyphs">Used</text>
<rect x="1136.3" y="654.5" width="12" height="12" fill="#f0f0f0" stroke="#e2e2e2" stroke-width="1.2"/>
<text x="1153.5" y="664.8" font-size="12" font-weight="bold" fill="#34505f" textLength="26.5" lengthAdjust="spacingAndGlyphs">Free</text>
<g stroke="#e1e3e5" stroke-width="1">
<path d="M1238 677.0 H1720.7"/>
<path d="M1238 715.3 H1720.7"/>
<path d="M1238 753.6 H1720.7"/>
<path d="M1238 791.9 H1720.7"/>
<path d="M1245.0 677 V791.9"/>
</g>
<path d="M1245.28 771.98h1.70V791.9h-1.70ZM1247.28 771.98h1.70V791.9h-1.70ZM1249.28 748.24h1.70V791.9h-1.70ZM1251.28 775.05h1.70V791.9h-1.70ZM1253.28 788.07h1.70V791.9h-1.70ZM1255.28 784.24h1.70V791.9h-1.70ZM1257.28 785.77h1.70V791.9h-1.70ZM1259.29 780.41h1.70V791.9h-1.70ZM1261.29 778.11h1.70V791.9h-1.70ZM1263.29 789.60h1.70V791.9h-1.70ZM1265.29 786.54h1.70V791.9h-1.70ZM1267.29 788.07h1.70V791.9h-1.70ZM1269.29 768.15h1.70V791.9h-1.70ZM1271.29 772.75h1.70V791.9h-1.70ZM1273.29 785.01h1.70V791.9h-1.70ZM1275.29 777.35h1.70V791.9h-1.70ZM1277.30 768.92h1.70V791.9h-1.70ZM1281.30 780.41h1.70V791.9h-1.70ZM1283.30 785.77h1.70V791.9h-1.70ZM1285.30 761.26h1.70V791.9h-1.70ZM1287.30 758.20h1.70V791.9h-1.70ZM1289.30 743.64h1.70V791.9h-1.70ZM1291.30 785.01h1.70V791.9h-1.70ZM1293.30 719.90h1.70V791.9h-1.70ZM1295.30 771.98h1.70V791.9h-1.70ZM1297.31 768.15h1.70V791.9h-1.70ZM1299.31 778.88h1.70V791.9h-1.70ZM1301.31 778.11h1.70V791.9h-1.70ZM1303.31 769.69h1.70V791.9h-1.70ZM1305.31 764.32h1.70V791.9h-1.70ZM1307.31 748.24h1.70V791.9h-1.70ZM1309.31 751.30h1.70V791.9h-1.70ZM1311.31 720.66h1.70V791.9h-1.70ZM1313.31 754.37h1.70V791.9h-1.70ZM1315.32 782.71h1.70V791.9h-1.70ZM1317.32 784.24h1.70V791.9h-1.70ZM1319.32 785.77h1.70V791.9h-1.70ZM1321.32 771.22h1.70V791.9h-1.70ZM1323.32 788.07h1.70V791.9h-1.70ZM1325.32 778.88h1.70V791.9h-1.70ZM1327.32 762.03h1.70V791.9h-1.70ZM1329.32 775.81h1.70V791.9h-1.70ZM1331.32 785.01h1.70V791.9h-1.70ZM1333.33 778.88h1.70V791.9h-1.70ZM1335.33 788.07h1.70V791.9h-1.70ZM1341.33 784.24h1.70V791.9h-1.70ZM1343.33 785.77h1.70V791.9h-1.70ZM1345.33 767.39h1.70V791.9h-1.70ZM1347.33 781.94h1.70V791.9h-1.70ZM1349.33 760.49h1.70V791.9h-1.70ZM1351.34 786.54h1.70V791.9h-1.70ZM1353.34 732.15h1.70V791.9h-1.70ZM1355.34 771.98h1.70V791.9h-1.70ZM1357.34 772.75h1.70V791.9h-1.70ZM1359.34 790.37h1.70V791.9h-1.70ZM1361.34 766.62h1.70V791.9h-1.70ZM1363.34 781.94h1.70V791.9h-1.70ZM1365.34 777.35h1.70V791.9h-1.70ZM1369.34 781.94h1.70V791.9h-1.70ZM1370.28 781.18h1.70V791.9h-1.70ZM1372.28 737.51h1.70V791.9h-1.70ZM1374.28 782.71h1.70V791.9h-1.70ZM1376.28 761.26h1.70V791.9h-1.70ZM1378.28 706.11h1.70V791.9h-1.70ZM1380.28 783.47h1.70V791.9h-1.70ZM1382.28 776.58h1.70V791.9h-1.70ZM1384.29 762.03h1.70V791.9h-1.70ZM1386.29 778.88h1.70V791.9h-1.70ZM1388.29 775.05h1.70V791.9h-1.70ZM1390.29 788.84h1.70V791.9h-1.70ZM1392.29 779.64h1.70V791.9h-1.70ZM1394.29 731.39h1.70V791.9h-1.70ZM1396.29 788.07h1.70V791.9h-1.70ZM1398.29 789.60h1.70V791.9h-1.70ZM1400.29 779.64h1.70V791.9h-1.70ZM1402.30 782.71h1.70V791.9h-1.70ZM1404.30 755.90h1.70V791.9h-1.70ZM1406.30 779.64h1.70V791.9h-1.70ZM1408.30 786.54h1.70V791.9h-1.70ZM1410.30 785.01h1.70V791.9h-1.70ZM1412.30 786.54h1.70V791.9h-1.70ZM1414.30 777.35h1.70V791.9h-1.70ZM1416.30 785.01h1.70V791.9h-1.70ZM1418.30 771.22h1.70V791.9h-1.70ZM1420.30 788.07h1.70V791.9h-1.70ZM1422.31 788.07h1.70V791.9h-1.70ZM1424.31 789.60h1.70V791.9h-1.70ZM1426.31 789.60h1.70V791.9h-1.70ZM1428.31 782.71h1.70V791.9h-1.70ZM1432.31 789.60h1.70V791.9h-1.70ZM1434.31 791.13h1.70V791.9h-1.70ZM1440.32 788.84h1.70V791.9h-1.70ZM1442.32 791.13h1.70V791.9h-1.70ZM1444.32 789.60h1.70V791.9h-1.70ZM1448.32 786.54h1.70V791.9h-1.70ZM1452.32 788.07h1.70V791.9h-1.70ZM1454.32 771.22h1.70V791.9h-1.70ZM1456.32 762.03h1.70V791.9h-1.70ZM1458.33 781.94h1.70V791.9h-1.70ZM1462.33 782.71h1.70V791.9h-1.70ZM1464.33 784.24h1.70V791.9h-1.70ZM1466.33 788.07h1.70V791.9h-1.70ZM1468.33 777.35h1.70V791.9h-1.70ZM1470.33 771.22h1.70V791.9h-1.70ZM1472.33 730.62h1.70V791.9h-1.70ZM1474.33 788.07h1.70V791.9h-1.70ZM1476.34 765.86h1.70V791.9h-1.70ZM1478.34 788.07h1.70V791.9h-1.70ZM1482.34 791.13h1.70V791.9h-1.70ZM1484.34 785.77h1.70V791.9h-1.70ZM1486.34 780.41h1.70V791.9h-1.70ZM1488.34 753.60h1.70V791.9h-1.70ZM1490.34 775.81h1.70V791.9h-1.70ZM1494.34 762.03h1.70V791.9h-1.70ZM1495.28 782.71h1.70V791.9h-1.70ZM1499.27 782.71h1.70V791.9h-1.70ZM1501.21 789.60h1.70V791.9h-1.70ZM1503.26 786.54h1.70V791.9h-1.70ZM1507.14 773.52h1.70V791.9h-1.70ZM1511.14 764.32h1.70V791.9h-1.70ZM1513.19 786.54h1.70V791.9h-1.70ZM1515.13 771.22h1.70V791.9h-1.70ZM1517.07 782.71h1.70V791.9h-1.70ZM1519.23 769.69h1.70V791.9h-1.70ZM1521.17 753.60h1.70V791.9h-1.70ZM1523.11 788.07h1.70V791.9h-1.70ZM1525.16 781.18h1.70V791.9h-1.70ZM1533.03 788.07h1.70V791.9h-1.70ZM1537.13 789.60h1.70V791.9h-1.70ZM1541.12 788.84h1.70V791.9h-1.70ZM1547.06 791.13h1.70V791.9h-1.70ZM1553.21 791.13h1.70V791.9h-1.70ZM1555.15 788.07h1.70V791.9h-1.70ZM1557.20 784.24h1.70V791.9h-1.70ZM1559.14 788.84h1.70V791.9h-1.70ZM1561.08 786.54h1.70V791.9h-1.70ZM1563.02 788.07h1.70V791.9h-1.70ZM1575.86 781.94h1.70V791.9h-1.70ZM1577.80 788.07h1.70V791.9h-1.70ZM1585.79 786.54h1.70V791.9h-1.70ZM1587.73 785.77h1.70V791.9h-1.70ZM1589.67 788.07h1.70V791.9h-1.70ZM1591.72 786.54h1.70V791.9h-1.70ZM1593.66 781.94h1.70V791.9h-1.70ZM1595.60 791.13h1.70V791.9h-1.70ZM1597.65 791.13h1.70V791.9h-1.70ZM1614.16 788.84h1.70V791.9h-1.70ZM1625.96 790.37h1.70V791.9h-1.70ZM1629.84 775.05h1.70V791.9h-1.70ZM1631.89 791.13h1.70V791.9h-1.70ZM1633.83 786.54h1.70V791.9h-1.70ZM1637.82 785.77h1.70V791.9h-1.70ZM1641.71 788.07h1.70V791.9h-1.70ZM1643.76 789.60h1.70V791.9h-1.70ZM1655.41 788.07h1.70V791.9h-1.70ZM1667.49 788.07h1.70V791.9h-1.70ZM1669.43 781.94h1.70V791.9h-1.70ZM1671.37 766.62h1.70V791.9h-1.70ZM1673.42 784.24h1.70V791.9h-1.70ZM1675.36 785.77h1.70V791.9h-1.70ZM1677.31 788.07h1.70V791.9h-1.70ZM1679.36 783.47h1.70V791.9h-1.70ZM1681.30 787.30h1.70V791.9h-1.70ZM1683.24 783.47h1.70V791.9h-1.70ZM1685.29 777.35h1.70V791.9h-1.70ZM1689.17 778.11h1.70V791.9h-1.70ZM1691.22 780.41h1.70V791.9h-1.70ZM1693.16 791.13h1.70V791.9h-1.70ZM1699.10 785.01h1.70V791.9h-1.70ZM1701.04 788.84h1.70V791.9h-1.70ZM1703.09 785.01h1.70V791.9h-1.70ZM1705.03 784.24h1.70V791.9h-1.70ZM1706.97 784.24h1.70V791.9h-1.70ZM1709.02 787.30h1.70V791.9h-1.70ZM1712.90 791.13h1.70V791.9h-1.70ZM1714.95 783.47h1.70V791.9h-1.70ZM1716.90 717.60h1.70V791.9h-1.70ZM1719.05 788.84h1.70V791.9h-1.70Z" fill="#97dfcb"/>
<path d="M1265.29 785.01h1.70v1.53h-1.70ZM1287.30 748.24h1.70v9.96h-1.70ZM1289.30 730.62h1.70v13.02h-1.70ZM1291.30 776.58h1.70v8.43h-1.70ZM1309.31 748.24h1.70v3.06h-1.70ZM1311.31 719.90h1.70v0.77h-1.70ZM1313.31 751.30h1.70v3.06h-1.70ZM1404.30 752.07h1.70v3.83h-1.70ZM1416.30 783.47h1.70v1.53h-1.70ZM1428.31 780.41h1.70v2.30h-1.70ZM1513.19 785.77h1.70v0.77h-1.70ZM1545.12 789.60h1.70v2.30h-1.70ZM1549.11 791.13h1.70v0.77h-1.70ZM1551.05 791.13h1.70v0.77h-1.70ZM1625.96 785.77h1.70v4.60h-1.70ZM1627.90 789.60h1.70v2.30h-1.70ZM1659.51 786.54h1.70v5.36h-1.70ZM1661.56 789.60h1.70v2.30h-1.70ZM1685.29 776.58h1.70v0.77h-1.70Z" fill="#fbb86c"/>
<path d="M1245.0 791.9 H1720.7" stroke="#cfd3d6" stroke-width="1"/>
<text x="1234.5" y="681.3" font-size="12" fill="#566b78" text-anchor="end">150</text>
<text x="1234.5" y="719.6" font-size="12" fill="#566b78" text-anchor="end">100</text>
<text x="1234.5" y="757.9" font-size="12" fill="#566b78" text-anchor="end">50</text>
<text x="1234.5" y="796.2" font-size="12" fill="#566b78" text-anchor="end">0</text>
<text x="1246.2" y="814" font-size="12" fill="#566b78" text-anchor="middle" textLength="30" lengthAdjust="spacingAndGlyphs">09:45</text>
<text x="1299.9" y="814" font-size="12" fill="#566b78" text-anchor="middle" textLength="30" lengthAdjust="spacingAndGlyphs">10:12</text>
<text x="1353.6" y="814" font-size="12" fill="#566b78" text-anchor="middle" textLength="30" lengthAdjust="spacingAndGlyphs">10:39</text>
<text x="1407.3" y="814" font-size="12" fill="#566b78" text-anchor="middle" textLength="30" lengthAdjust="spacingAndGlyphs">11:06</text>
<text x="1461.0" y="814" font-size="12" fill="#566b78" text-anchor="middle" textLength="30" lengthAdjust="spacingAndGlyphs">11:33</text>
<text x="1514.7" y="814" font-size="12" fill="#566b78" text-anchor="middle" textLength="30" lengthAdjust="spacingAndGlyphs">12:00</text>
<text x="1568.4" y="814" font-size="12" fill="#566b78" text-anchor="middle" textLength="30" lengthAdjust="spacingAndGlyphs">12:27</text>
<text x="1622.1" y="814" font-size="12" fill="#566b78" text-anchor="middle" textLength="30" lengthAdjust="spacingAndGlyphs">12:54</text>
<text x="1675.8" y="814" font-size="12" fill="#566b78" text-anchor="middle" textLength="30" lengthAdjust="spacingAndGlyphs">13:21</text>
<rect x="1532.4" y="654" width="12.2" height="12.2" fill="#97dfcb"/>
<text x="1550.3" y="664.7" font-size="12" font-weight="bold" fill="#34505f" textLength="18.2" lengthAdjust="spacingAndGlyphs">Hit</text>
<rect x="1578.8" y="654" width="12.2" height="12.2" fill="#fbb86c"/>
<text x="1596.2" y="664.7" font-size="12" font-weight="bold" fill="#34505f" textLength="27.3" lengthAdjust="spacingAndGlyphs">Miss</text>
<rect x="1633.2" y="654" width="12.2" height="12.2" fill="#f79490"/>
<text x="1651.2" y="664.7" font-size="12" font-weight="bold" fill="#34505f" textLength="60.3" lengthAdjust="spacingAndGlyphs">Thrashing</text>
<g stroke="#d7d8da" stroke-width="1">
<path d="M707.5 963 V1020"/>
<path d="M767.5 963 V1020"/>
<path d="M826.5 963 V1020"/>
<path d="M886.5 963 V1020"/>
<path d="M945.5 963 V1020"/>
<path d="M1004.5 963 V1020"/>
<path d="M1064.5 963 V1020"/>
<path d="M1123.5 963 V1020"/>
<path d="M1183.5 963 V1020"/>
<path d="M1242.5 963 V1020"/>
<path d="M1301.5 963 V1020"/>
<path d="M1361.5 963 V1020"/>
<path d="M1420.5 963 V1020"/>
<path d="M1480.5 963 V1020"/>
<path d="M1539.5 963 V1020"/>
<path d="M1598.5 963 V1020"/>
<path d="M1658.5 963 V1020"/>
<path d="M1717.5 963 V1020"/>
<path d="M699.5 963.5 H1721.5"/>
<path d="M699.5 999.5 H1721.5"/>
</g>
<text x="696.8" y="967.3" font-size="12" fill="#566b78" text-anchor="end">300</text>
<text x="696.8" y="1003.4" font-size="12" fill="#566b78" text-anchor="end">200</text>
<text x="700.5" y="950.6" font-size="12" font-weight="bold" fill="#34505f" textLength="32" lengthAdjust="spacingAndGlyphs">Mbps</text>
<path d="M1497.6 946.3 H1501.6 M1504 946.3 H1508" stroke="#3a5566" stroke-width="1.6"/>
<text x="1511.2" y="950.6" font-size="12" font-weight="bold" fill="#34505f" textLength="96.7" lengthAdjust="spacingAndGlyphs">Write Throttling</text>
<rect x="1617.2" y="940.5" width="12" height="12" fill="#d3f1e7" stroke="#86d9bd" stroke-width="1.2"/>
<text x="1634.7" y="950.6" font-size="12" font-weight="bold" fill="#34505f" textLength="33.6" lengthAdjust="spacingAndGlyphs">Write</text>
<rect x="1677.5" y="940.5" width="12" height="12" fill="#d3e5f5" stroke="#8fbde5" stroke-width="1.2"/>
<text x="1695.5" y="950.6" font-size="12" font-weight="bold" fill="#34505f" textLength="30.6" lengthAdjust="spacingAndGlyphs">Read</text>
<path d="M719.5 1020 L724.4 1000.8 L726.3 1020 Z" fill="#cfe3f4"/>
<path d="M719.5 1020 L724.4 1000.8 L726.3 1020" fill="none" stroke="#4d9ad6" stroke-width="1.1"/>
<path d="M794 1020 L796.5 976.8 L801.3 962.3 L804.3 1020 Z" fill="#cfe3f4"/>
<path d="M794 1020 L796.5 976.8 L801.3 962.3 L804.3 1020" fill="none" stroke="#4d9ad6" stroke-width="1.1"/>
</svg>
</body></html>
